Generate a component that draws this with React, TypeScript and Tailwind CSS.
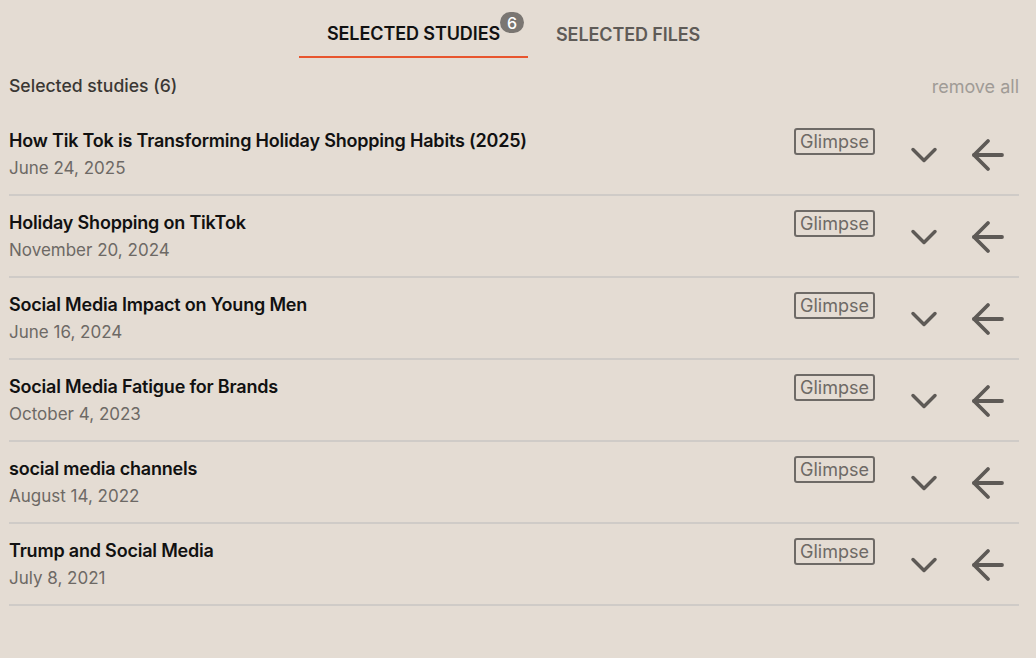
import { ChevronDown, ArrowLeft } from "lucide-react";

const studies = [
  { title: "How Tik Tok is Transforming Holiday Shopping Habits (2025)", date: "June 24, 2025" },
  { title: "Holiday Shopping on TikTok", date: "November 20, 2024" },
  { title: "Social Media Impact on Young Men", date: "June 16, 2024" },
  { title: "Social Media Fatigue for Brands", date: "October 4, 2023" },
  { title: "social media channels", date: "August 14, 2022" },
  { title: "Trump and Social Media", date: "July 8, 2021" },
];

export default function App() {
  return (
    <main className="min-h-screen bg-[#e4dcd3] font-['Inter',sans-serif] text-[#111]">
      <nav className="flex h-[58px] pl-[299px]">
        <div className="relative flex w-[229px] items-center justify-center border-b-2 border-[#e8552e] pt-[10px]">
          <span className="text-[18px] font-semibold tracking-[-0.1px] text-[#111]">SELECTED STUDIES</span>
          <span className="absolute left-[201px] top-[12px] flex h-[21px] w-[24px] items-center justify-center rounded-full bg-[#7a7672] text-[16px] font-medium text-white">6</span>
        </div>
        <div className="flex items-center pl-[28px] pt-[10px]">
          <span className="text-[18px] font-semibold tracking-[-0.1px] text-[#5f5b57]">SELECTED FILES</span>
        </div>
      </nav>

      <section className="pl-[9px] pr-[17px]">
        <div className="flex h-[56px] items-center justify-between">
          <h2 className="text-[17.6px] font-medium text-[#3a3733]">Selected studies ({studies.length})</h2>
          <button className="text-[18px] text-[#a09b96]">remove all</button>
        </div>

        <ul>
          {studies.map((s) => (
            <li key={s.title} className="flex h-[82px] items-start border-b-2 border-[#cfcbc7]">
              <div className="flex-1 pt-[15px]">
                <div className="text-[18px] leading-[24px] font-semibold tracking-[-0.2px] text-[#111]">{s.title}</div>
                <div className="mt-[4px] text-[17px] leading-[22px] text-[#6d6965]">{s.date}</div>
              </div>
              <span className="mt-[14px] rounded-[3px] border-2 border-[#6e6a66] px-[4px] text-[18px] leading-[23px] text-[#6e6a66]">Glimpse</span>
              <ChevronDown className="ml-[27px] mt-[19px] h-[44px] w-[44px] text-[#5e5a56]" strokeWidth={1.9} />
              <ArrowLeft className="ml-[18px] mt-[17px] h-[48px] w-[48px] text-[#5e5a56]" strokeWidth={1.9} />
              <div className="w-[7px]" />
            </li>
          ))}
        </ul>
      </section>
    </main>
  );
}
